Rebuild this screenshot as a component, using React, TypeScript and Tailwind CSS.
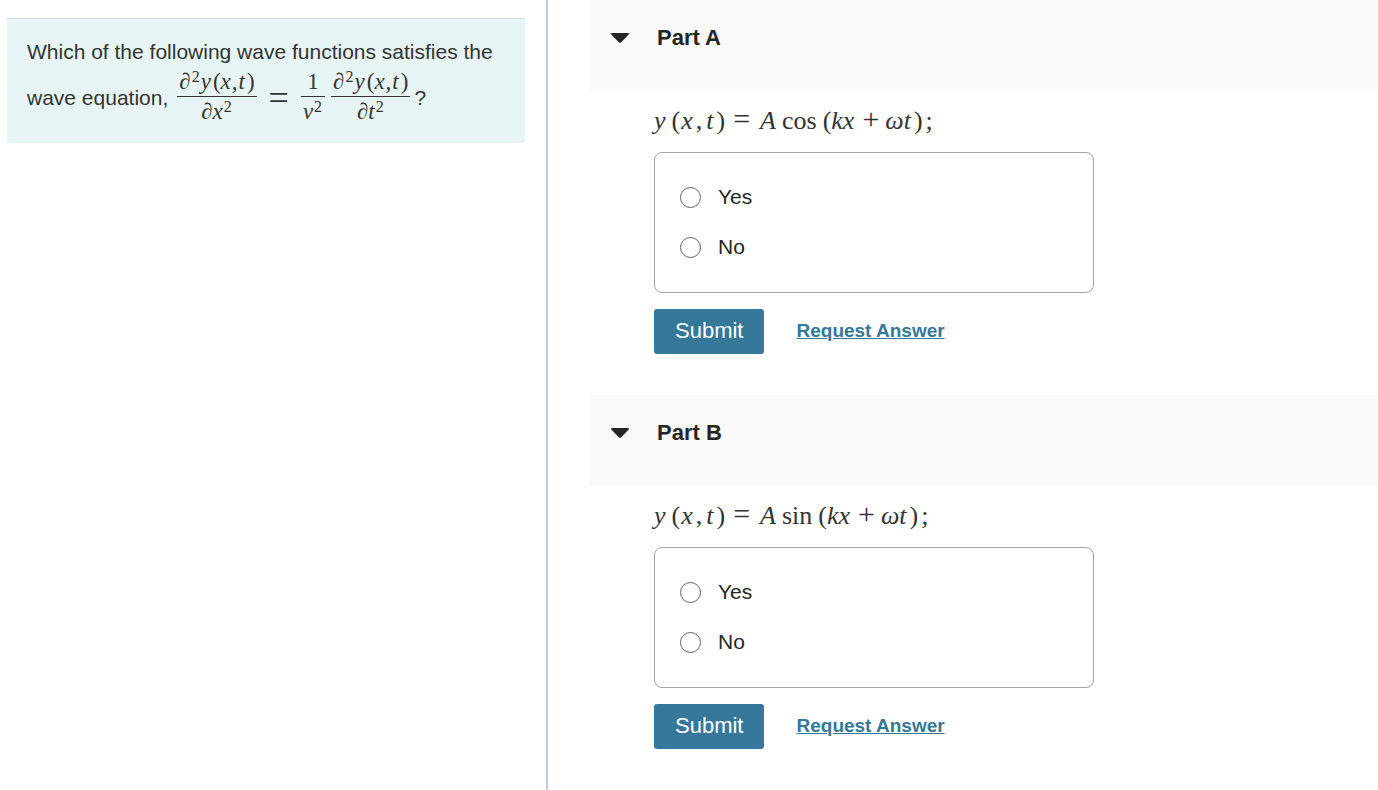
import type { ReactNode } from 'react';

interface FractionProps {
  top: ReactNode;
  bottom: ReactNode;
}

interface PartProps {
  id: string;
  title: string;
  fn: string;
}

const CHOICES = ['Yes', 'No'];

const Sup = ({ children }: { children: ReactNode }) => (
  <sup className="top-0 mx-px align-[7px] text-[16px] leading-none not-italic">{children}</sup>
);

const Fraction = ({ top, bottom }: FractionProps) => (
  <span className="inline-flex flex-col text-center text-[23px] leading-7 italic">
    <span className="border-b border-[#333] px-[2px]">{top}</span>
    <span className="leading-[30px]">{bottom}</span>
  </span>
);

// second partial derivative of y(x,t)
const Derivative = ({ by }: { by: string }) => (
  <Fraction
    top={
      <>
        ∂<Sup>2</Sup>
        <span>y</span>
        <span className="ml-[2px] not-italic">(</span>
        <span>x</span>
        <span className="ml-px">,</span>
        <span className="ml-px">t</span>
        <span className="ml-[2px] not-italic">)</span>
      </>
    }
    bottom={
      <>
        ∂{by}
        <Sup>2</Sup>
      </>
    }
  />
);

const WaveFunction = ({ fn }: { fn: string }) => (
  <p className="flex items-baseline pt-[15px] pb-[17px] font-['Liberation_Serif',serif] text-[26px] leading-[29px]">
    <i>y</i>
    <span className="ml-[6px]">(</span>
    <i className="ml-px">x</i>
    <span className="ml-[3px]">,</span>
    <i className="ml-1">t</i>
    <span className="ml-[3px]">)</span>
    <span className="ml-2 text-[30px] leading-5">=</span>
    <i className="ml-[10px]">A</i>
    <span className="ml-[6px]">{fn}</span>
    <span className="ml-[6px]">(</span>
    <i>kx</i>
    <span className="ml-2 text-[30px] leading-5">+</span>
    <i className="ml-[6px]">ωt</i>
    <span className="ml-[3px]">)</span>
    <span className="ml-[3px]">;</span>
  </p>
);

const Part = ({ id, title, fn }: PartProps) => (
  <section className="pb-[41px]">
    <header className="bg-[#f9f9f9] pt-[23px] pb-[38px] pl-[22px]">
      <h2>
        <button
          type="button"
          aria-expanded="true"
          className="flex items-center gap-7 text-[22px] leading-[30px] font-bold text-[#252525]"
        >
          <svg viewBox="0 0 18 10" className="h-[10px] w-[18px]" fill="currentColor" aria-hidden="true">
            <path d="M1 0h16c.9 0 1.300 .8.700 1.400L10 9.400c-.6.600-1.400.600-2 0L.300 1.400C-.300.800.100 0 1 0z" />
          </svg>
          {title}
        </button>
      </h2>
    </header>

    <form className="pr-5 pl-[65px]" onSubmit={(e) => e.preventDefault()}>
      <WaveFunction fn={fn} />

      <div
        role="radiogroup"
        aria-label={title}
        className="max-w-[440px] rounded-lg border border-[#a6a6a6] px-[25px] pt-[19px] pb-5"
      >
        {CHOICES.map((choice) => (
          <label key={choice} className="flex h-[50px] items-center gap-[17px] text-[21px] text-[#252525]">
            <input
              type="radio"
              name={id}
              value={choice}
              className="size-[21px] appearance-none rounded-full border border-[#606060] bg-white checked:border-[6px] checked:border-[#357899]"
            />
            {choice}
          </label>
        ))}
      </div>

      <div className="mt-4 flex items-center gap-8">
        <button type="submit" className="h-[45px] rounded-[3px] bg-[#357899] px-[21px] pb-[2px] text-[22px] text-white">
          Submit
        </button>
        <a href="#" className="text-[19px] font-bold text-[#357899] underline">
          Request Answer
        </a>
      </div>
    </form>
  </section>
);

export default function App() {
  return (
    <div className="flex min-h-screen bg-white font-['Liberation_Sans',Arial,sans-serif] text-[#333]">
      <aside className="w-[548px] max-w-2/5 shrink-0 border-r-2 border-[#bccbdd] pt-[18px] pr-[21px] pl-[7px]">
        <div className="border-t border-[#d8dcdc] bg-[#e8f5f6] px-5 pt-[19px] pb-4 text-[21px] leading-7">
          <p>Which of the following wave functions satisfies the</p>
          <div className="flex flex-wrap items-center pt-[2px]">
            <span>wave equation,</span>
            <span className="ml-[9px] flex items-center font-['Liberation_Serif',serif]">
              <Derivative by="x" />
              <span className="mx-3 text-[36px]">=</span>
              <span className="flex items-center gap-[6px]">
                <Fraction
                  top={<span className="not-italic">1</span>}
                  bottom={
                    <span className="px-[2px]">
                      v<Sup>2</Sup>
                    </span>
                  }
                />
                <Derivative by="t" />
              </span>
            </span>
            <span className="ml-1">?</span>
          </div>
        </div>
      </aside>

      <main className="min-w-0 flex-1 pl-[41px]">
        <Part id="part-a" title="Part A" fn="cos" />
        <Part id="part-b" title="Part B" fn="sin" />
      </main>
    </div>
  );
}
